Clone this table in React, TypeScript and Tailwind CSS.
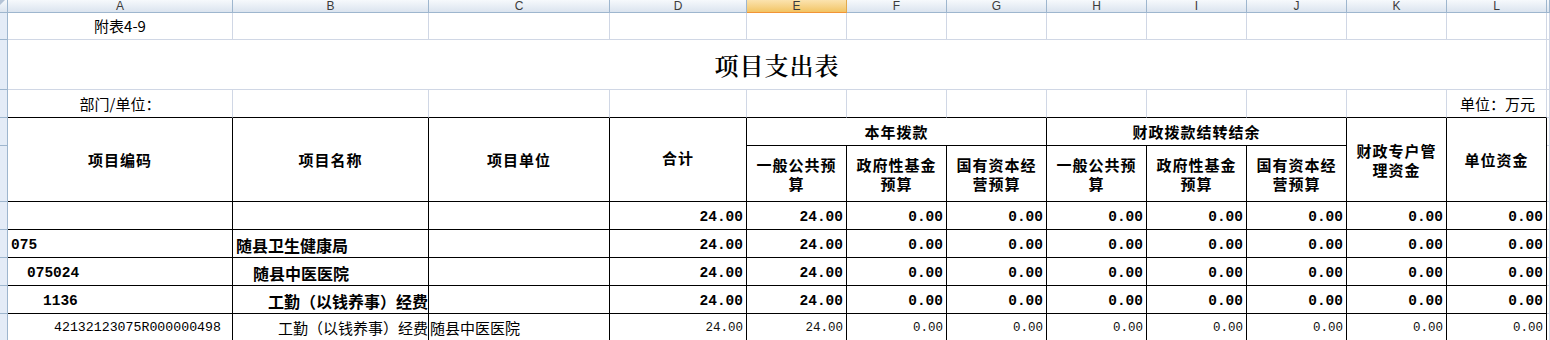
const grid = "p-0 border-r border-b border-[#d0d7e5]";
const gridTopOfTable = "p-0 border-r border-b border-r-[#d0d7e5] border-b-black";
const rowNum = "p-0 bg-[#e4ecf7] border-r border-b border-[#9eb6ce]";
const cell = "p-0 border-r border-b border-black align-middle";
const hdr =
  "p-0 border-r border-b border-[#9eb6ce] bg-linear-to-b from-[#f6f9fc] to-[#dbe4ef] font-normal";
const hdrSel =
  "p-0 border-r border-b border-r-[#e1a94c] border-b-[#f29436] bg-linear-to-b from-[#fbe3ae] to-[#f2c463] font-normal";
const mono = "font-['Liberation_Mono','Noto_Sans_CJK_SC',monospace]";

const letters = ["A", "B", "C", "D", "E", "F", "G", "H", "I", "J", "K", "L"];

type DataRow = {
  code: string;
  codePad: string;
  name: string;
  namePad: string;
  unit: string;
  values: string[];
  bold: boolean;
};

const values = ["24.00", "24.00", "0.00", "0.00", "0.00", "0.00", "0.00", "0.00", "0.00"];

const dataRows: DataRow[] = [
  { code: "", codePad: "pl-[3px]", name: "", namePad: "pl-[3px]", unit: "", values, bold: true },
  { code: "075", codePad: "pl-[3px]", name: "随县卫生健康局", namePad: "pl-[3px]", unit: "", values, bold: true },
  { code: "075024", codePad: "pl-[19px]", name: "随县中医医院", namePad: "pl-[20px]", unit: "", values, bold: true },
  { code: "1136", codePad: "pl-[35px]", name: "工勤（以钱养事）经费", namePad: "pl-[35px]", unit: "", values, bold: true },
  {
    code: "42132123075R000000498",
    codePad: "pl-[46px]",
    name: "工勤（以钱养事）经费",
    namePad: "pl-[45px]",
    unit: "随县中医医院",
    values,
    bold: false,
  },
];

function ColumnLetter({ letter }: { letter: string }) {
  return (
    <div className="h-[12px] overflow-hidden text-center font-['Liberation_Sans',sans-serif] text-[12px] leading-[12px] text-[#3b3b3b]">
      {letter}
    </div>
  );
}

function HeaderText({ lines }: { lines: string[] }) {
  return (
    <div className="text-center text-[15px] font-bold leading-[19px] tracking-[1px]">
      {lines.map((l, i) => (
        <div key={i}>{l}</div>
      ))}
    </div>
  );
}

export default function App() {
  return (
    <div className="w-[1550px] h-[340px] overflow-hidden bg-white font-['Noto_Sans_CJK_SC',sans-serif] text-black">
      <table className="table-fixed border-separate border-spacing-0 w-[1550px]">
        <colgroup>
          <col className="w-[8px]" />
          <col className="w-[225px]" />
          <col className="w-[196px]" />
          <col className="w-[181px]" />
          <col className="w-[137px]" />
          <col className="w-[100px]" />
          <col className="w-[100px]" />
          <col className="w-[100px]" />
          <col className="w-[100px]" />
          <col className="w-[100px]" />
          <col className="w-[100px]" />
          <col className="w-[100px]" />
          <col className="w-[100px]" />
          <col className="w-[3px]" />
        </colgroup>
        <tbody>
          {/* column letters */}
          <tr className="h-[13px]">
            <td className={hdr + " relative"}>
              <div className="absolute left-0 top-0 w-0 h-0 border-t-[5px] border-r-[5px] border-t-[#b4c3d6] border-r-transparent" />
            </td>
            {letters.map((l) => (
              <td key={l} className={l === "E" ? hdrSel : hdr}>
                <ColumnLetter letter={l} />
              </td>
            ))}
            <td className={hdr} />
          </tr>

          {/* 附表 */}
          <tr className="h-[27px]">
            <td className={rowNum} />
            <td className={grid + " text-center text-[15px] leading-[20px]"}>附表4-9</td>
            {letters.slice(1).map((l) => (
              <td key={l} className={grid} />
            ))}
            <td className={grid} />
          </tr>

          {/* title */}
          <tr className="h-[50px]">
            <td className={rowNum} />
            <td
              colSpan={12}
              className={
                grid +
                " text-center font-['Noto_Serif_CJK_SC','Noto_Sans_CJK_SC',serif] text-[24px] font-semibold leading-[30px] tracking-[1px]"
              }
            >
              项目支出表
            </td>
            <td className={grid} />
          </tr>

          {/* 部门/单位 */}
          <tr className="h-[28px]">
            <td className={rowNum} />
            <td className={gridTopOfTable + " text-center text-[15px] leading-[20px]"}>部门/单位：</td>
            {letters.slice(1, 11).map((l) => (
              <td key={l} className={gridTopOfTable} />
            ))}
            <td className={gridTopOfTable + " text-right pr-[11px] text-[15px] leading-[20px]"}>单位：万元</td>
            <td className={grid} />
          </tr>

          {/* table header row 1 */}
          <tr className="h-[28px]">
            <td className={rowNum} />
            <td rowSpan={2} className={cell}>
              <HeaderText lines={["项目编码"]} />
            </td>
            <td rowSpan={2} className={cell}>
              <HeaderText lines={["项目名称"]} />
            </td>
            <td rowSpan={2} className={cell}>
              <HeaderText lines={["项目单位"]} />
            </td>
            <td rowSpan={2} className={cell}>
              <div className="-mt-[4px]">
                <HeaderText lines={["合计"]} />
              </div>
            </td>
            <td colSpan={3} className={cell}>
              <HeaderText lines={["本年拨款"]} />
            </td>
            <td colSpan={3} className={cell}>
              <HeaderText lines={["财政拨款结转结余"]} />
            </td>
            <td rowSpan={2} className={cell}>
              <HeaderText lines={["财政专户管", "理资金"]} />
            </td>
            <td rowSpan={2} className={cell}>
              <HeaderText lines={["单位资金"]} />
            </td>
            <td className={grid} />
          </tr>

          {/* table header row 2 */}
          <tr className="h-[56px]">
            <td className={rowNum} />
            <td className={cell}>
              <HeaderText lines={["一般公共预", "算"]} />
            </td>
            <td className={cell}>
              <HeaderText lines={["政府性基金", "预算"]} />
            </td>
            <td className={cell}>
              <HeaderText lines={["国有资本经", "营预算"]} />
            </td>
            <td className={cell}>
              <HeaderText lines={["一般公共预", "算"]} />
            </td>
            <td className={cell}>
              <HeaderText lines={["政府性基金", "预算"]} />
            </td>
            <td className={cell}>
              <HeaderText lines={["国有资本经", "营预算"]} />
            </td>
            <td className={grid} />
          </tr>

          {/* data */}
          {dataRows.map((r, i) => (
            <tr key={i} className="h-[28px]">
              <td className={rowNum} />
              <td className={cell}>
                <div
                  className={`${r.codePad} ${mono} whitespace-nowrap ${
                    r.bold ? "pt-[3px] text-[14.5px] font-bold leading-[20px]" : "text-[13.25px] leading-[20px]"
                  }`}
                >
                  {r.code}
                </div>
              </td>
              <td className={cell}>
                <div
                  className={`${r.namePad} whitespace-nowrap ${
                    r.bold ? "pt-[2px] text-[16px] font-bold leading-[22px]" : "text-[15px] leading-[22px]"
                  }`}
                >
                  {r.name}
                </div>
              </td>
              <td className={cell}>
                <div className="pl-px whitespace-nowrap text-[15px] leading-[22px]">{r.unit}</div>
              </td>
              {r.values.map((v, j) => (
                <td key={j} className={cell}>
                  <div
                    className={`text-right pr-[3px] ${mono} ${
                      r.bold
                        ? "pt-[3px] text-[14.5px] font-bold leading-[20px]"
                        : "text-[12.5px] leading-[20px] text-[#111]"
                    }`}
                  >
                    {v}
                  </div>
                </td>
              ))}
              <td className={grid} />
            </tr>
          ))}
        </tbody>
      </table>
    </div>
  );
}
